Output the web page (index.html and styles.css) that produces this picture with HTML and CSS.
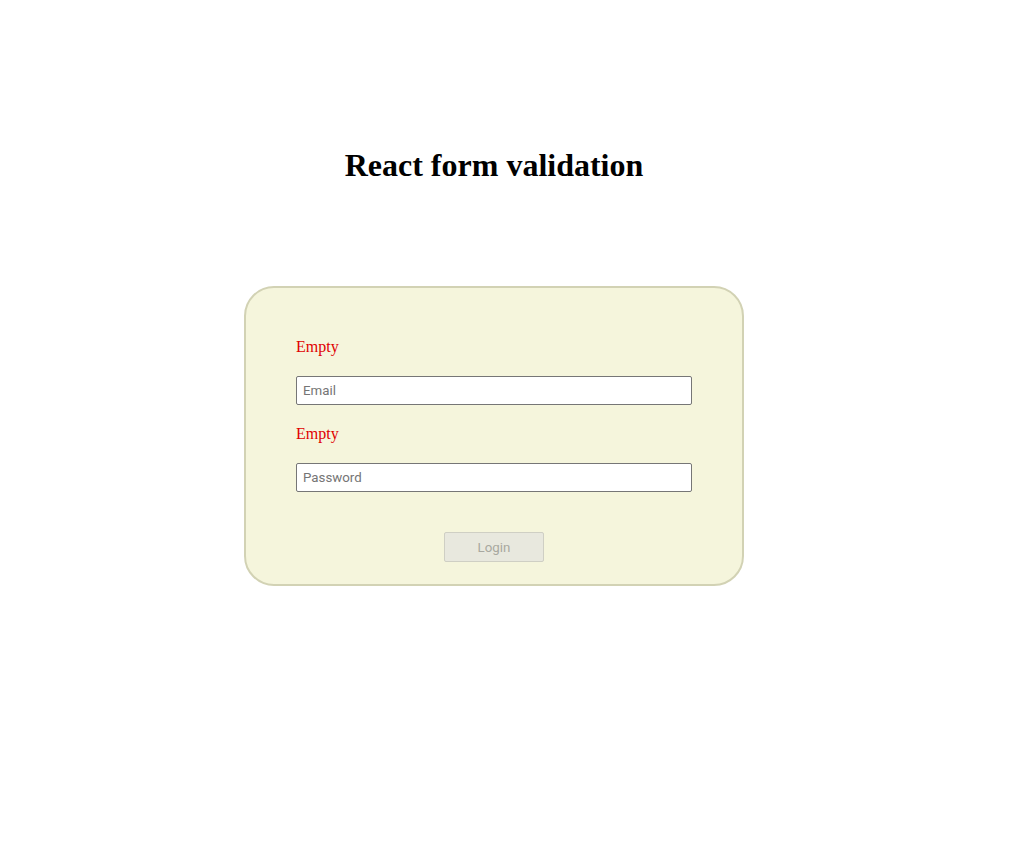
FILE: index.html
```html
<!DOCTYPE html>
<html>
<head>
<meta charset="utf-8">
<link rel="stylesheet" href="styles.css">
</head>
<body>
<div class="page">
  <h1 class="title">React form validation</h1>
  <form class="card">
    <div class="error">Empty</div>
    <input class="field" type="text" placeholder="Email">
    <div class="error">Empty</div>
    <input class="field" type="password" placeholder="Password">
    <div class="actions">
      <button class="btn" type="button" disabled>Login</button>
    </div>
  </form>
</div>
</body>
</html>
```
FILE: styles.css
```css
html, body {
  margin: 0;
  padding: 0;
  background: #ffffff;
}
.page {
  width: 972px;
  margin-left: 8px;
  padding-top: 147px;
  display: flex;
  flex-direction: column;
  align-items: center;
  font-family: "Liberation Serif", "Times New Roman", serif;
}
.title {
  margin: 0;
  font-size: 32px;
  font-weight: bold;
  line-height: 36px;
  color: #000;
}
.card {
  margin-top: 103px;
  width: 396px;
  padding: 50px 50px 22px;
  background: #f5f5dc;
  border: 2px solid #d2d2b4;
  border-radius: 30px;
  display: flex;
  flex-direction: column;
}
.error {
  color: #e00000;
  font-size: 16px;
  line-height: 18px;
  margin-bottom: 20px;
}
.field {
  box-sizing: border-box;
  width: 396px;
  height: 29px;
  margin: 0 0 20px;
  padding: 1px 6px;
  border: 1px solid #767676;
  border-radius: 2px;
  background: #fff;
  font-family: Roboto, "Liberation Sans", Arial, sans-serif;
  font-size: 13.3px;
}
.field::placeholder {
  color: #757575;
}
.field + .actions {
  margin-top: 20px;
}
.actions {
  display: flex;
  justify-content: center;
}
.btn {
  box-sizing: border-box;
  width: 100px;
  height: 30px;
  background: #e8e8de;
  border: 1px solid #cfcfc4;
  border-radius: 2px;
  color: #a8a8a0;
  font-family: Roboto, "Liberation Sans", Arial, sans-serif;
  font-size: 13.3px;
  padding: 0;
}
```
